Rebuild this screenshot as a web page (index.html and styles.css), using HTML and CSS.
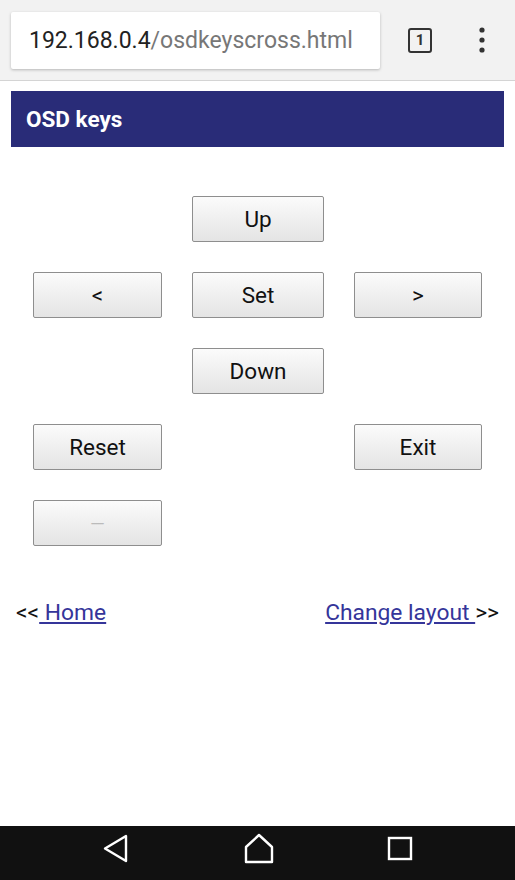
FILE: index.html
```html
<!DOCTYPE html>
<html>
<head>
<meta charset="utf-8">
<link rel="stylesheet" href="styles.css">
</head>
<body>
<div class="screen">
  <div class="chrome">
    <div class="urlbox"><span class="host">192.168.0.4</span><span class="path">/osdkeyscross.html</span></div>
    <div class="tabs"><span>1</span></div>
    <div class="menu">
      <svg width="10" height="28" viewBox="0 0 10 28"><circle cx="5" cy="4" r="2.6" fill="#333"/><circle cx="5" cy="14" r="2.6" fill="#333"/><circle cx="5" cy="24" r="2.6" fill="#333"/></svg>
    </div>
  </div>
  <main class="page">
    <h1 class="title">OSD keys</h1>
    <div class="keys">
      <span></span><button class="key">Up</button><span></span>
      <button class="key">&lt;</button><button class="key">Set</button><button class="key">&gt;</button>
      <span></span><button class="key">Down</button><span></span>
      <button class="key">Reset</button><span></span><button class="key">Exit</button>
      <button class="key dim">—</button><span></span><span></span>
    </div>
    <div class="links">
      <span>&lt;&lt;<a href="#"> Home</a></span>
      <span><a href="#">Change layout </a>&gt;&gt;</span>
    </div>
  </main>
  <nav class="navbar">
    <svg width="30" height="30" viewBox="0 0 30 30"><path d="M4 14.5 L25 2 L25 27 Z" fill="none" stroke="#fff" stroke-width="2.4" stroke-linejoin="round"/></svg>
    <svg width="32" height="32" viewBox="0 0 32 32"><path d="M3 29 L3 14 L16 2 L29 14 L29 29 Z" fill="none" stroke="#fff" stroke-width="2.4" stroke-linejoin="round"/></svg>
    <svg width="26" height="26" viewBox="0 0 26 26"><rect x="2" y="2" width="22" height="21" fill="none" stroke="#fff" stroke-width="2.4"/></svg>
  </nav>
</div>
</body>
</html>
```
FILE: styles.css
```css
* { box-sizing: border-box; }
html, body { margin: 0; padding: 0; background: #fff; }
body { font-family: Roboto, "Liberation Sans", Arial, sans-serif; }
.screen { width: 515px; height: 880px; display: flex; flex-direction: column; overflow: hidden; }
.chrome {
  height: 81px; background: #f2f2f2; border-bottom: 1px solid #d4d4d4;
  display: flex; align-items: center; padding: 0 0 0 11px;
}
.urlbox {
  width: 369px; height: 57px; background: #fff; border-radius: 2px;
  box-shadow: 0 1px 3px rgba(0,0,0,0.25);
  display: flex; align-items: center; padding-left: 18px;
  font-size: 23px; letter-spacing: 0;
}
.host { color: #222; }
.path { color: #777; }
.tabs {
  margin-left: 28px; width: 24px; height: 25px; border: 2.5px solid #333; border-radius: 3px;
  display: flex; align-items: center; justify-content: center;
  font-size: 15px; font-weight: bold; color: #333;
}
.menu { margin-left: 45px; display: flex; align-items: center; }
.page { flex: 1; padding: 10px 11px 0 11px; }
.title {
  margin: 0; height: 56px; background: #292c78; color: #fff;
  font-size: 22.5px; font-weight: bold; display: flex; align-items: center; padding-left: 15px;
}
.keys {
  display: grid; grid-template-columns: 129px 132px 128px; grid-auto-rows: 46px;
  column-gap: 30px; row-gap: 30px; margin: 49px 0 0 22px;
}
.key {
  font-family: Roboto, "Liberation Sans", Arial, sans-serif; font-size: 22.5px; color: #111;
  background: linear-gradient(#fbfbfb, #e4e4e4); border: 1px solid #8e8e8e; border-radius: 2px;
  padding: 0; margin: 0;
}
.key.dim { color: #bbb; font-size: 19px; }
.links {
  margin-top: 53px; display: flex; justify-content: space-between; padding: 0 5px;
  font-size: 22.8px; color: #111;
}
.links a { color: #35359a; text-decoration: underline; }
.navbar {
  height: 54px; background: #111; display: flex; align-items: center; justify-content: center; gap: 112px;
  padding: 0 2px 9px 0;
}
```
